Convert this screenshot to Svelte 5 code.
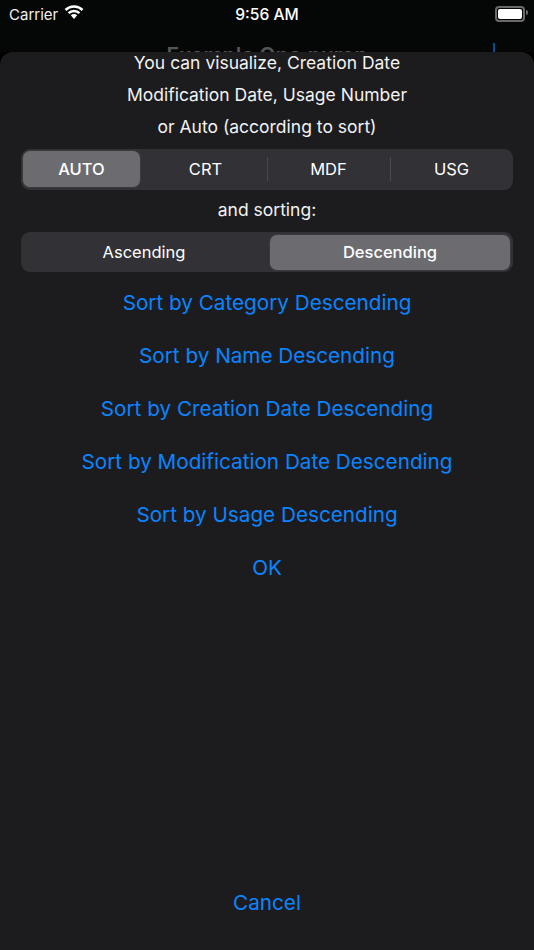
<script lang="ts">
  const fields = ['AUTO', 'CRT', 'MDF', 'USG'];
  const orders = ['Ascending', 'Descending'];
  const sorts = ['Category', 'Name', 'Creation Date', 'Modification Date', 'Usage'];
  let field = $state('AUTO');
  let order = $state('Descending');
</script>

<main class="screen">
  <header class="behind">
    <div class="status">
      <div class="carrier">
        <span>Carrier</span>
        <svg width="20" height="15" viewBox="0 0 20 15">
          <path d="M10 0.300A13.500 13.500 0 0 0 0.600 4.100l1.700 1.800A11 11 0 0 1 10 2.800a11 11 0 0 1 7.700 3.100l1.700-1.800A13.500 13.500 0 0 0 10 0.300z" fill="#fff"/>
          <path d="M10 4.700a9 9 0 0 0-6.300 2.600l1.700 1.800A6.600 6.600 0 0 1 10 7.200a6.600 6.600 0 0 1 4.600 1.900l1.700-1.800A9 9 0 0 0 10 4.700z" fill="#fff"/>
          <path d="M10 9a4.600 4.600 0 0 0-3.200 1.300L10 14l3.200-3.700A4.600 4.600 0 0 0 10 9z" fill="#fff"/>
        </svg>
      </div>
      <div class="time">9:56 AM</div>
      <div class="battery"><i class="level"></i><i class="nub"></i></div>
    </div>
    <div class="nav">
      <span class="title">Example One.nuron</span>
      <i class="caret"></i>
    </div>
  </header>

  <section class="sheet">
    <div class="intro">
      <p>You can visualize, Creation Date</p>
      <p>Modification Date, Usage Number</p>
      <p>or Auto (according to sort)</p>
    </div>

    <div class="segmented">
      {#each fields as f, i}
        <button class="seg" class:active={field === f} class:divided={i > 1} onclick={() => (field = f)}>{f}</button>
      {/each}
    </div>

    <p class="label">and sorting:</p>

    <div class="segmented second">
      {#each orders as o}
        <button class="seg" class:active={order === o} onclick={() => (order = o)}>{o}</button>
      {/each}
    </div>

    <div class="actions">
      {#each sorts as s}
        <button class="link">Sort by {s} {order}</button>
      {/each}
      <button class="link">OK</button>
    </div>

    <button class="link cancel">Cancel</button>
  </section>
</main>

<style>
  :global(body) {
    margin: 0;
    background: #000;
  }
  .screen {
    width: 534px;
    height: 950px;
    display: flex;
    flex-direction: column;
    overflow: hidden;
    font-family: Inter, "Liberation Sans", sans-serif;
    color: #fff;
  }
  .behind {
    height: 52px;
    flex: none;
    overflow: hidden;
    background: #050706;
  }
  .status {
    height: 28px;
    display: flex;
    align-items: center;
    justify-content: space-between;
    padding: 0 7px 0 9px;
    position: relative;
  }
  .carrier {
    display: flex;
    align-items: center;
    gap: 6px;
    font-size: 15px;
    color: #f0f0f0;
  }
  .carrier svg {
    margin-top: -4px;
  }
  .time {
    position: absolute;
    left: 0;
    right: 0;
    text-align: center;
    font-size: 15.600px;
    font-weight: 500;
  }
  .battery {
    width: 24px;
    height: 10px;
    border: 2px solid #6a6a6a;
    border-radius: 4px;
    padding: 1px;
    display: flex;
    position: relative;
    margin-right: 2px;
  }
  .level {
    flex: 1;
    background: #fff;
    border-radius: 2px;
  }
  .nub {
    position: absolute;
    right: -5px;
    top: 2px;
    width: 2px;
    height: 5px;
    background: #6a6a6a;
    border-radius: 0 2px 2px 0;
  }
  .nav {
    position: relative;
    text-align: center;
    padding-top: 14px;
  }
  .title {
    font-size: 21.200px;
    font-weight: 600;
    color: #555;
  }
  .caret {
    position: absolute;
    left: 493px;
    top: 15px;
    width: 2px;
    height: 20px;
    background: #0a4f94;
  }
  .sheet {
    flex: 1;
    display: flex;
    flex-direction: column;
    align-items: center;
    background: #1c1c1e;
    border-radius: 13px 13px 0 0;
    padding: 0 21px;
  }
  p {
    margin: 0;
    font-size: 17.500px;
    line-height: 22px;
    text-align: center;
    color: #f2f2f2;
  }
  .intro {
    display: flex;
    flex-direction: column;
    gap: 10px;
    margin-bottom: 11px;
  }
  .segmented {
    width: 100%;
    height: 41px;
    box-sizing: border-box;
    display: flex;
    background: #313136;
    border-radius: 9px;
  }
  .second {
    height: 40px;
  }
  .seg {
    flex: 1 1 0;
    min-width: 0;
    margin: 2px 3px 3px;
    position: relative;
    border: 0;
    padding: 0;
    background: none;
    border-radius: 7px;
    color: #fff;
    font: 400 16.500px Inter, "Liberation Sans", sans-serif;
  }
  .seg:first-child {
    margin-left: 2px;
    margin-right: 4px;
  }
  .second .seg {
    margin: 2.500px 3px;
  }
  .seg.active {
    background: #6c6c70;
    box-shadow: 0 0 0 1px #3a3a3e;
    font-weight: 500;
  }
  .seg.divided::before {
    content: "";
    position: absolute;
    left: -3px;
    top: 6px;
    bottom: 6px;
    width: 1px;
    background: #4a4a4e;
  }
  .label {
    margin: 9px 0 11px;
  }
  .actions {
    display: flex;
    flex-direction: column;
    align-items: center;
    gap: 23px;
    margin-top: 15px;
  }
  .link {
    border: 0;
    padding: 0;
    background: none;
    height: 30px;
    color: #0a84ff;
    font: 400 20.700px Inter, "Liberation Sans", sans-serif;
  }
  .cancel {
    margin-top: auto;
    margin-bottom: 33px;
  }
</style>
